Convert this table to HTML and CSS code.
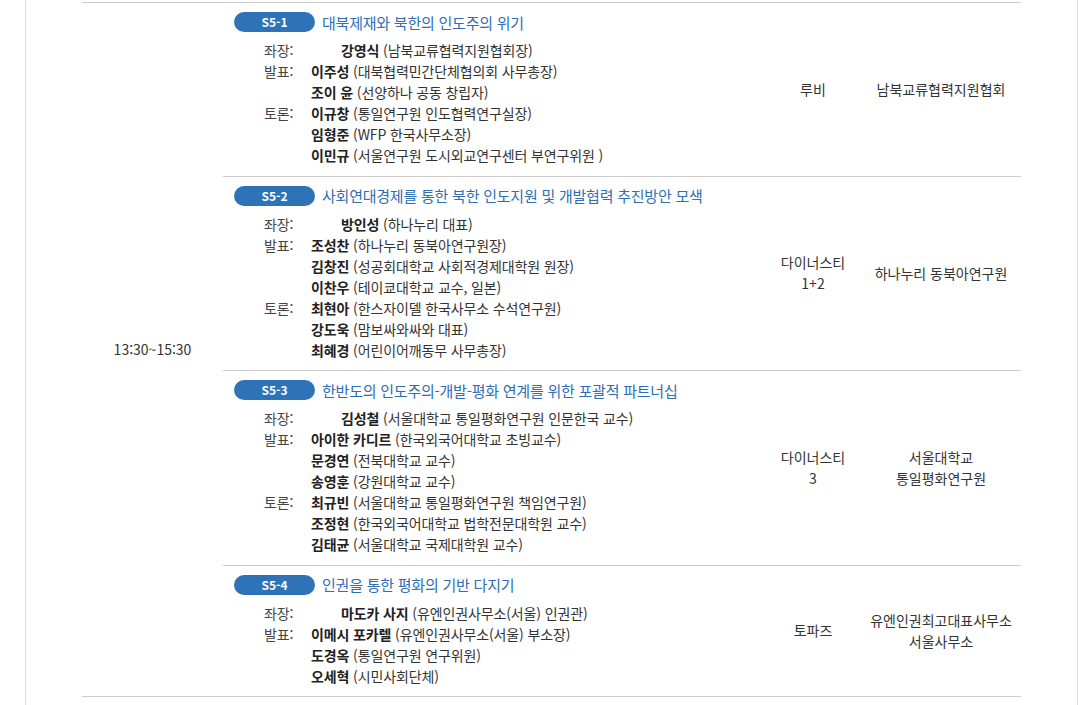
FILE: index.html
```html
<!DOCTYPE html>
<html lang="ko">
<head>
  <meta charset="UTF-8" />
  <meta name="viewport" content="width=device-width, initial-scale=1.0" />
  <title>세션 5 프로그램</title>
  <link rel="stylesheet" href="styles.css">
</head>
<body>
  <div class="page">
    <table class="program">
      <colgroup>
        <col class="col-time">
        <col class="col-session">
        <col class="col-room">
        <col class="col-host">
      </colgroup>
      <tbody>
        <tr>
          <td class="time" rowspan="4">13:30~15:30</td>
          <td class="session">
            <div class="session-head">
              <span class="badge">S5-1</span>
              <span class="session-title">대북제재와 북한의 인도주의 위기</span>
            </div>
            <ul class="people">
              <li><span class="role">좌장:</span><span class="chair"><b>강영식</b> (남북교류협력지원협회장)</span></li>
              <li><span class="role">발표:</span><span><b>이주성</b> (대북협력민간단체협의회 사무총장)</span></li>
              <li><span class="role"></span><span><b>조이 윤</b> (선양하나 공동 창립자)</span></li>
              <li><span class="role">토론:</span><span><b>이규창</b> (통일연구원 인도협력연구실장)</span></li>
              <li><span class="role"></span><span><b>임형준</b> (WFP 한국사무소장)</span></li>
              <li><span class="role"></span><span><b>이민규</b> (서울연구원 도시외교연구센터 부연구위원 )</span></li>
            </ul>
          </td>
          <td class="room">루비</td>
          <td class="host">남북교류협력지원협회</td>
        </tr>
        <tr>
          <td class="session">
            <div class="session-head">
              <span class="badge">S5-2</span>
              <span class="session-title">사회연대경제를 통한 북한 인도지원 및 개발협력 추진방안 모색</span>
            </div>
            <ul class="people">
              <li><span class="role">좌장:</span><span class="chair"><b>방인성</b> (하나누리 대표)</span></li>
              <li><span class="role">발표:</span><span><b>조성찬</b> (하나누리 동북아연구원장)</span></li>
              <li><span class="role"></span><span><b>김창진</b> (성공회대학교 사회적경제대학원 원장)</span></li>
              <li><span class="role"></span><span><b>이찬우</b> (테이쿄대학교 교수, 일본)</span></li>
              <li><span class="role">토론:</span><span><b>최현아</b> (한스자이델 한국사무소 수석연구원)</span></li>
              <li><span class="role"></span><span><b>강도욱</b> (맘보싸와싸와 대표)</span></li>
              <li><span class="role"></span><span><b>최혜경</b> (어린이어깨동무 사무총장)</span></li>
            </ul>
          </td>
          <td class="room">다이너스티<br>1+2</td>
          <td class="host">하나누리 동북아연구원</td>
        </tr>
        <tr>
          <td class="session">
            <div class="session-head">
              <span class="badge">S5-3</span>
              <span class="session-title">한반도의 인도주의-개발-평화 연계를 위한 포괄적 파트너십</span>
            </div>
            <ul class="people">
              <li><span class="role">좌장:</span><span class="chair"><b>김성철</b> (서울대학교 통일평화연구원 인문한국 교수)</span></li>
              <li><span class="role">발표:</span><span><b>아이한 카디르</b> (한국외국어대학교 초빙교수)</span></li>
              <li><span class="role"></span><span><b>문경연</b> (전북대학교 교수)</span></li>
              <li><span class="role"></span><span><b>송영훈</b> (강원대학교 교수)</span></li>
              <li><span class="role">토론:</span><span><b>최규빈</b> (서울대학교 통일평화연구원 책임연구원)</span></li>
              <li><span class="role"></span><span><b>조정현</b> (한국외국어대학교 법학전문대학원 교수)</span></li>
              <li><span class="role"></span><span><b>김태균</b> (서울대학교 국제대학원 교수)</span></li>
            </ul>
          </td>
          <td class="room">다이너스티<br>3</td>
          <td class="host">서울대학교<br>통일평화연구원</td>
        </tr>
        <tr>
          <td class="session">
            <div class="session-head">
              <span class="badge">S5-4</span>
              <span class="session-title">인권을 통한 평화의 기반 다지기</span>
            </div>
            <ul class="people">
              <li><span class="role">좌장:</span><span class="chair"><b>마도카 사지</b> (유엔인권사무소(서울) 인권관)</span></li>
              <li><span class="role">발표:</span><span><b>이메시 포카렐</b> (유엔인권사무소(서울) 부소장)</span></li>
              <li><span class="role"></span><span><b>도경옥</b> (통일연구원 연구위원)</span></li>
              <li><span class="role"></span><span><b>오세혁</b> (시민사회단체)</span></li>
            </ul>
          </td>
          <td class="room">토파즈</td>
          <td class="host">유엔인권최고대표사무소<br>서울사무소</td>
        </tr>
      </tbody>
    </table>
  </div>
</body>
</html>
```

FILE: styles.css
```css
* {
  margin: 0;
  padding: 0;
  box-sizing: border-box;
}

body {
  font-family: "Noto Sans CJK KR", "Noto Sans", sans-serif;
  background: #fff;
  color: #333;
  font-size: 14px;
}

.page {
  margin: 0 6px 0 25px;
  min-height: 705px;
  padding: 2px 0 8px 56px;
  border-left: 1px solid #ddd;
  border-right: 1px solid #ddd;
}

.program {
  width: 939px;
  table-layout: fixed;
  border-collapse: collapse;
  border-top: 1px solid #ccc;
}

.col-time { width: 141px; }
.col-session { width: 542px; }
.col-room { width: 96px; }
.col-host { width: 160px; }

.program td {
  border-bottom: 1px solid #ccc;
  line-height: 21px;
  color: #333;
}

.time {
  text-align: center;
  vertical-align: middle;
}

.room, .host {
  text-align: center;
  vertical-align: middle;
}

.session {
  vertical-align: top;
  padding: 9px 0 9.5px 11px;
}

.session-head {
  display: flex;
  align-items: center;
  gap: 7px;
  height: 20px;
  margin-bottom: 8px;
}

.badge {
  display: inline-block;
  width: 81px;
  height: 20px;
  border-radius: 10px;
  background: #2e73b8;
  color: #fff;
  font-size: 12px;
  font-weight: bold;
  line-height: 20px;
  text-align: center;
}

.session-title {
  font-size: 15px;
  letter-spacing: -0.23px;
  color: #2d6eb4;
  white-space: nowrap;
}

.people {
  list-style: none;
  padding-left: 30px;
  letter-spacing: -0.13px;
}

.people li {
  display: flex;
  height: 21px;
  white-space: nowrap;
}

.role {
  width: 47px;
  flex-shrink: 0;
  color: #444;
}

.chair {
  padding-left: 30px;
}

.people b {
  font-weight: bold;
  color: #222;
}
```
